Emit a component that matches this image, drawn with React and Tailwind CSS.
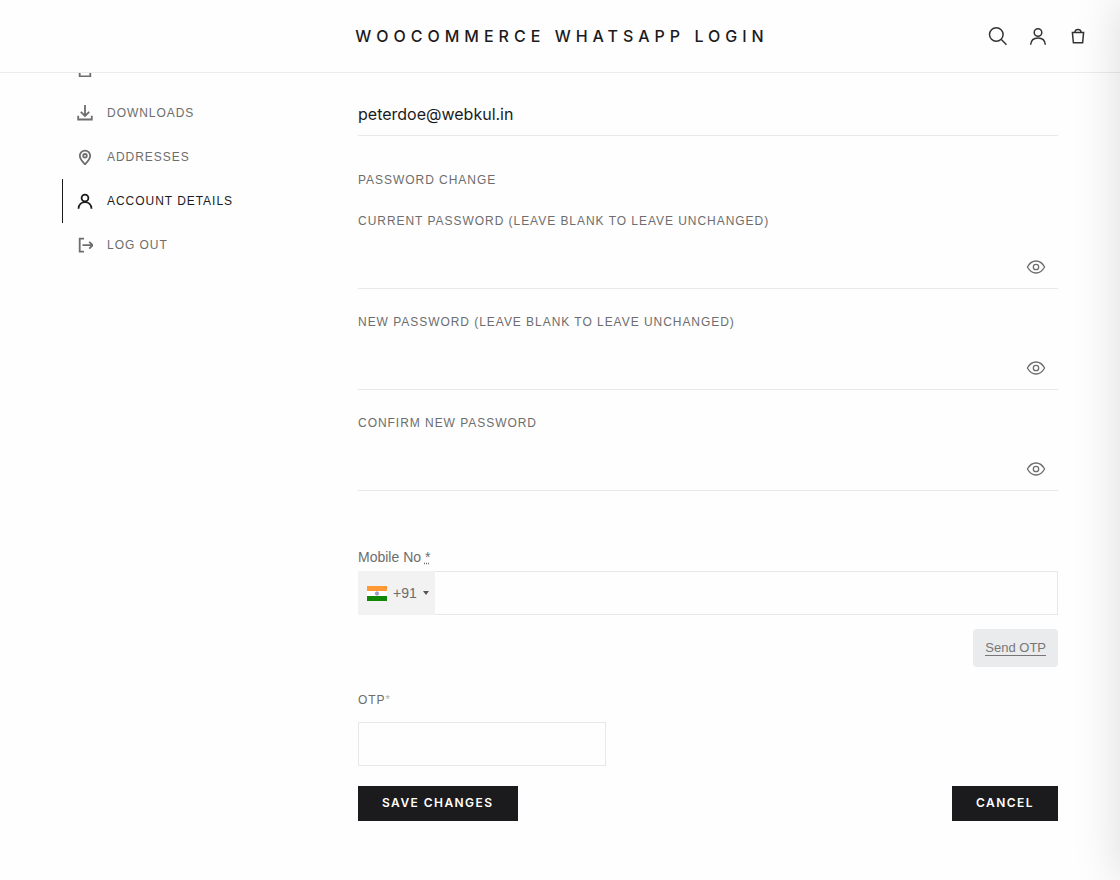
import { useState } from 'react';

const navItems = [
  { id: 'orders', label: 'Orders' },
  { id: 'downloads', label: 'Downloads' },
  { id: 'addresses', label: 'Addresses' },
  { id: 'account', label: 'Account details' },
  { id: 'logout', label: 'Log out' },
];

const passwordFields = [
  { id: 'password_current', label: 'Current password (leave blank to leave unchanged)' },
  { id: 'password_1', label: 'New password (leave blank to leave unchanged)' },
  { id: 'password_2', label: 'Confirm new password' },
];

const labelClass = 'block text-xs tracking-[0.08em] uppercase';
const buttonClass =
  'h-[35px] px-6 pb-0.5 bg-[#1b1b1d] text-white font-[Inter,sans-serif] text-xs font-semibold tracking-[0.12em] uppercase';

function NavIcon({ name }) {
  return (
    <svg className="h-4 w-4 shrink-0" viewBox="0 0 16 16" fill="none" stroke="currentColor" strokeWidth="1.8" aria-hidden="true">
      {name === 'orders' && <path d="M2.7 1h10.6v14.3H2.7z" />}
      {name === 'downloads' && <path d="M8 0v11M3.8 6.8L8 11l4.2-4.2M1.2 10.8v3.7h13.6v-3.7" />}
      {name === 'addresses' && (
        <>
          <path d="M8 15.3C5 12.3 2.8 9.8 2.8 6.8a5.2 5.2 0 0 1 10.4 0c0 3-2.2 5.5-5.2 8.5z" />
          <circle cx="8" cy="6.8" r="1.8" />
        </>
      )}
      {name === 'account' && (
        <>
          <circle cx="8" cy="5" r="3.4" />
          <path d="M1.5 15.8c.2-4 2.9-6.6 6.5-6.6s6.3 2.6 6.5 6.6" />
        </>
      )}
      {name === 'logout' && <path d="M7 1.7H2.7v13H7M5.5 8.2h10M12.2 4.8l3.5 3.4-3.5 3.4" />}
    </svg>
  );
}

function Header() {
  return (
    <header className="fixed inset-x-0 top-0 z-10 grid h-[73px] grid-cols-[1fr_auto_1fr] items-center border-b border-[#ebebeb] bg-[#fefefe] pr-8 pl-9 text-[#333]">
      <a href="#home" className="col-start-2 font-[Inter,sans-serif] text-base font-medium tracking-[5px] text-[#1b1b1d] uppercase">
        WooCommerce WhatsApp Login
      </a>
      <div className="flex justify-end gap-5">
        <button type="button" aria-label="Search">
          <svg className="h-5 w-5" viewBox="0 0 20 20" fill="none" stroke="currentColor" strokeWidth="1.5">
            <circle cx="8.3" cy="8.5" r="6.8" />
            <path d="M13.1 13.3l5.4 5.4" />
          </svg>
        </button>
        <a href="#account" aria-label="My account">
          <svg className="h-5 w-5" viewBox="0 0 20 20" fill="none" stroke="currentColor" strokeWidth="1.5">
            <circle cx="10" cy="6.5" r="3.8" />
            <path d="M2.6 18.8c.4-4.4 3.4-6.8 7.4-6.8s7 2.4 7.4 6.8" />
          </svg>
        </a>
        <a href="#cart" aria-label="Cart">
          <svg className="h-5 w-5" viewBox="0 0 20 20" fill="none" stroke="currentColor" strokeWidth="1.5">
            <path d="M4.4 6.6h11.2l-1 10.2H5.4z" />
            <path d="M6.9 6.6c0-1.9 1.3-3.2 3.1-3.2s3.1 1.3 3.1 3.2" />
          </svg>
        </a>
      </div>
    </header>
  );
}

function PasswordField({ id, label }) {
  const [visible, setVisible] = useState(false);

  return (
    <div>
      <label htmlFor={id} className={labelClass}>{label}</label>
      <div className="mt-4 flex h-11 items-center border-b border-[#e8e8e8] pr-3">
        <input
          id={id}
          type={visible ? 'text' : 'password'}
          className="h-full min-w-0 flex-1 bg-transparent font-[Inter,sans-serif] text-base text-[#1b1b1d] outline-none"
        />
        <button type="button" aria-label="Show password" onClick={() => setVisible(!visible)}>
          <svg className="h-5 w-5" viewBox="0 0 20 20" fill="none" stroke="currentColor" strokeWidth="1.3">
            <path d="M1.4 10C3.5 6.2 6.5 4 10 4s6.5 2.2 8.6 6c-2.1 3.8-5.1 6-8.6 6s-6.5-2.2-8.6-6z" />
            <circle cx="10" cy="10" r="2.7" />
          </svg>
        </button>
      </div>
    </div>
  );
}

function IndiaFlag() {
  return (
    <svg className="h-[15px] w-5 shrink-0" viewBox="0 0 20 15" aria-hidden="true">
      <path fill="#ff9933" d="M0 0h20v5H0z" />
      <path fill="#fff" d="M0 5h20v5H0z" />
      <path fill="#128807" d="M0 10h20v5H0z" />
      <circle cx="10" cy="7.5" r="1.7" fill="#a5a5cc" stroke="#7d7db5" strokeWidth="0.6" />
    </svg>
  );
}

export default function App() {
  return (
    <div className="min-h-screen bg-[#fefefe] font-['Liberation_Sans',Arial,sans-serif] text-[#6d6d6d]">
      <Header />
      <main className="flex px-[62px] pt-[47px] pb-14">
        <nav className="w-[296px] shrink-0">
          {navItems.map((item) => (
            <a
              key={item.id}
              href={`#${item.id}`}
              className={`flex h-11 items-center gap-3.5 border-l pl-3.5 text-xs tracking-[0.08em] uppercase ${
                item.id === 'account' ? 'border-[#1b1b1d] text-[#1b1b1d]' : 'border-transparent'
              }`}
            >
              <NavIcon name={item.id} />
              {item.label}
            </a>
          ))}
        </nav>

        <form className="min-w-0 flex-1 pt-[13px]" onSubmit={(e) => e.preventDefault()}>
          <label htmlFor="email" className={labelClass}>Email address</label>
          <input
            id="email"
            type="email"
            defaultValue="peterdoe@webkul.in"
            className="mt-4 block h-11 w-full border-b border-[#e8e8e8] font-[Inter,sans-serif] text-base text-[#1b1b1d] outline-none"
          />

          <fieldset className="mt-9">
            <legend className={labelClass}>Password change</legend>
            <div className="mt-[25px] flex flex-col gap-[25px]">
              {passwordFields.map((field) => (
                <PasswordField key={field.id} id={field.id} label={field.label} />
              ))}
            </div>
          </fieldset>

          <label htmlFor="mobile" className="mt-14 block text-sm">
            Mobile No <abbr title="required">*</abbr>
          </label>
          <div className="mt-1 flex h-11 border border-[#e8e8e8]">
            <div className="-my-px -ml-px flex w-[77px] items-center bg-[#f2f2f2] pl-[9px]">
              <IndiaFlag />
              <select aria-label="Country code" className="ml-1.5 w-[30px] appearance-none text-sm outline-none">
                <option>+91</option>
              </select>
              <svg className="h-1 w-1.5 shrink-0" viewBox="0 0 6 4" aria-hidden="true">
                <path fill="#555" d="M0 0h6L3 4z" />
              </svg>
            </div>
            <input id="mobile" type="tel" className="min-w-0 flex-1 px-3 text-sm outline-none" />
          </div>
          <div className="mt-3.5 flex justify-end">
            <button type="button" className="h-[38px] rounded bg-[#e9ebed] px-3 text-[13px] text-[#777]">
              <span className="border-b border-[#777] leading-4">Send OTP</span>
            </button>
          </div>

          <label htmlFor="otp" className={`mt-[25px] ${labelClass}`}>
            OTP<span className="align-top text-[11px] text-[#aaa]">*</span>
          </label>
          <input id="otp" type="text" className="mt-3.5 block h-11 w-[248px] border border-[#e8e8e8] px-3 text-sm outline-none" />

          <div className="mt-5 flex justify-between">
            <button type="submit" className={buttonClass}>Save changes</button>
            <button type="button" className={buttonClass}>Cancel</button>
          </div>
        </form>
      </main>

      {/* closed cart drawer, only its shadow reaches the page */}
      <aside className="fixed inset-y-0 left-full z-20 w-80 shadow-[0_0_45px_rgba(0,0,0,0.14)]" />
    </div>
  );
}
